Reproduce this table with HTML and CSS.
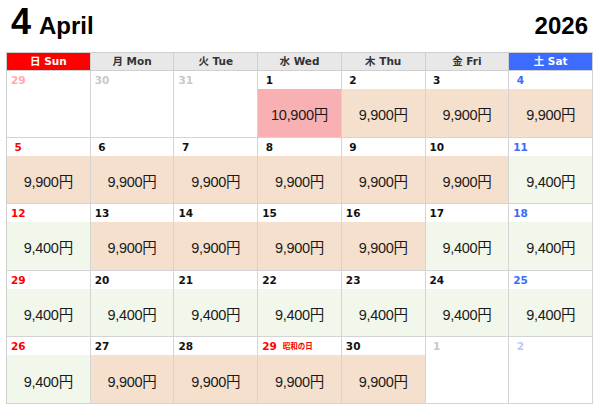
FILE: index.html
```html
<!DOCTYPE html>
<html lang="ja">
<head>
<meta charset="utf-8">
<title>April 2026</title>
<link rel="stylesheet" href="styles.css">
</head>
<body>
<div class="head">
  <span class="mnum">4</span>
  <span class="mname">April</span>
  <span class="year">2026</span>
</div>
<div class="cal">
  <div class="wd sun">日 Sun</div>
  <div class="wd">月 Mon</div>
  <div class="wd">火 Tue</div>
  <div class="wd">水 Wed</div>
  <div class="wd">木 Thu</div>
  <div class="wd">金 Fri</div>
  <div class="wd sat">土 Sat</div>

  <div class="cell"><div class="num other-sun">29</div></div>
  <div class="cell"><div class="num other">30</div></div>
  <div class="cell"><div class="num other">31</div></div>
  <div class="cell"><div class="num one">1</div><div class="price pink">10,900円</div></div>
  <div class="cell"><div class="num one">2</div><div class="price peach">9,900円</div></div>
  <div class="cell"><div class="num one">3</div><div class="price peach">9,900円</div></div>
  <div class="cell"><div class="num one blue">4</div><div class="price peach">9,900円</div></div>

  <div class="cell"><div class="num one red">5</div><div class="price peach">9,900円</div></div>
  <div class="cell"><div class="num one">6</div><div class="price peach">9,900円</div></div>
  <div class="cell"><div class="num one">7</div><div class="price peach">9,900円</div></div>
  <div class="cell"><div class="num one">8</div><div class="price peach">9,900円</div></div>
  <div class="cell"><div class="num one">9</div><div class="price peach">9,900円</div></div>
  <div class="cell"><div class="num">10</div><div class="price peach">9,900円</div></div>
  <div class="cell"><div class="num blue">11</div><div class="price green">9,400円</div></div>

  <div class="cell"><div class="num red">12</div><div class="price green">9,400円</div></div>
  <div class="cell"><div class="num">13</div><div class="price peach">9,900円</div></div>
  <div class="cell"><div class="num">14</div><div class="price peach">9,900円</div></div>
  <div class="cell"><div class="num">15</div><div class="price peach">9,900円</div></div>
  <div class="cell"><div class="num">16</div><div class="price peach">9,900円</div></div>
  <div class="cell"><div class="num">17</div><div class="price green">9,400円</div></div>
  <div class="cell"><div class="num blue">18</div><div class="price green">9,400円</div></div>

  <div class="cell"><div class="num red">29</div><div class="price green">9,400円</div></div>
  <div class="cell"><div class="num">20</div><div class="price green">9,400円</div></div>
  <div class="cell"><div class="num">21</div><div class="price green">9,400円</div></div>
  <div class="cell"><div class="num">22</div><div class="price green">9,400円</div></div>
  <div class="cell"><div class="num">23</div><div class="price green">9,400円</div></div>
  <div class="cell"><div class="num">24</div><div class="price green">9,400円</div></div>
  <div class="cell"><div class="num blue">25</div><div class="price green">9,400円</div></div>

  <div class="cell"><div class="num red">26</div><div class="price green">9,400円</div></div>
  <div class="cell"><div class="num">27</div><div class="price peach">9,900円</div></div>
  <div class="cell"><div class="num">28</div><div class="price peach">9,900円</div></div>
  <div class="cell"><div class="num red">29<span class="hol">昭和の日</span></div><div class="price peach">9,900円</div></div>
  <div class="cell"><div class="num">30</div><div class="price peach">9,900円</div></div>
  <div class="cell"><div class="num one other">1</div></div>
  <div class="cell"><div class="num one other-sat">2</div></div>
</div>
</body>
</html>
```
FILE: styles.css
```css
html, body {
  margin: 0;
  padding: 0;
  background: #fff;
}
body {
  width: 600px;
  height: 415px;
  overflow: hidden;
  font-family: "DejaVu Sans", "Noto Sans CJK JP", sans-serif;
  color: #111;
}
.head {
  height: 52px;
  box-sizing: border-box;
  padding: 4px 12px 0 11px;
  display: flex;
  align-items: baseline;
  font-family: "Liberation Sans", "Noto Sans CJK JP", sans-serif;
  font-weight: bold;
  color: #000;
}
.mnum {
  font-size: 36px;
  line-height: 36px;
}
.mname {
  font-size: 24px;
  margin-left: 8px;
}
.year {
  font-size: 24px;
  margin-left: auto;
}
.cal {
  margin-left: 6px;
  width: 587px;
  height: 352px;
  box-sizing: border-box;
  display: grid;
  grid-template-columns: repeat(7, 1fr);
  grid-template-rows: 18px repeat(5, 1fr);
  border-top: 1px solid #cfcfcf;
  border-left: 1px solid #cfcfcf;
}
.wd {
  background: #e8e8e8;
  border-right: 1px solid #cfcfcf;
  border-bottom: 1px solid #cfcfcf;
  font-size: 10.5px;
  font-weight: bold;
  line-height: 17px;
  text-align: center;
  color: #333;
}
.wd.sun { background: #ff0000; color: #fff; }
.wd.sat { background: #3d6bff; color: #fff; }
.cell {
  display: flex;
  flex-direction: column;
  border-right: 1px solid #d4d4d4;
  border-bottom: 1px solid #d4d4d4;
  min-width: 0;
  min-height: 0;
}
.num {
  height: 18px;
  line-height: 18px;
  padding-left: 4px;
  font-size: 10.5px;
  font-weight: bold;
  color: #111;
  white-space: nowrap;
}
.num.one { padding-left: 7.5px; }
.num.red { color: #ff0000; }
.num.blue { color: #3d6bff; }
.num.other { color: #c8c8c8; }
.num.other-sun { color: #ffaaaa; }
.num.other-sat { color: #b8c8ff; }
.hol {
  font-size: 7.5px;
  margin-left: 6px;
  vertical-align: 1px;
}
.price {
  flex: 1;
  display: flex;
  align-items: center;
  justify-content: center;
  font-family: "Liberation Sans", "Noto Sans CJK JP", sans-serif;
  font-size: 14.5px;
  letter-spacing: -0.3px;
  color: #1a1a1a;
  padding-top: 2px;
}
.peach { background: #f5e0ce; }
.green { background: #f1f7ea; }
.pink { background: #f9b0b3; }
```
